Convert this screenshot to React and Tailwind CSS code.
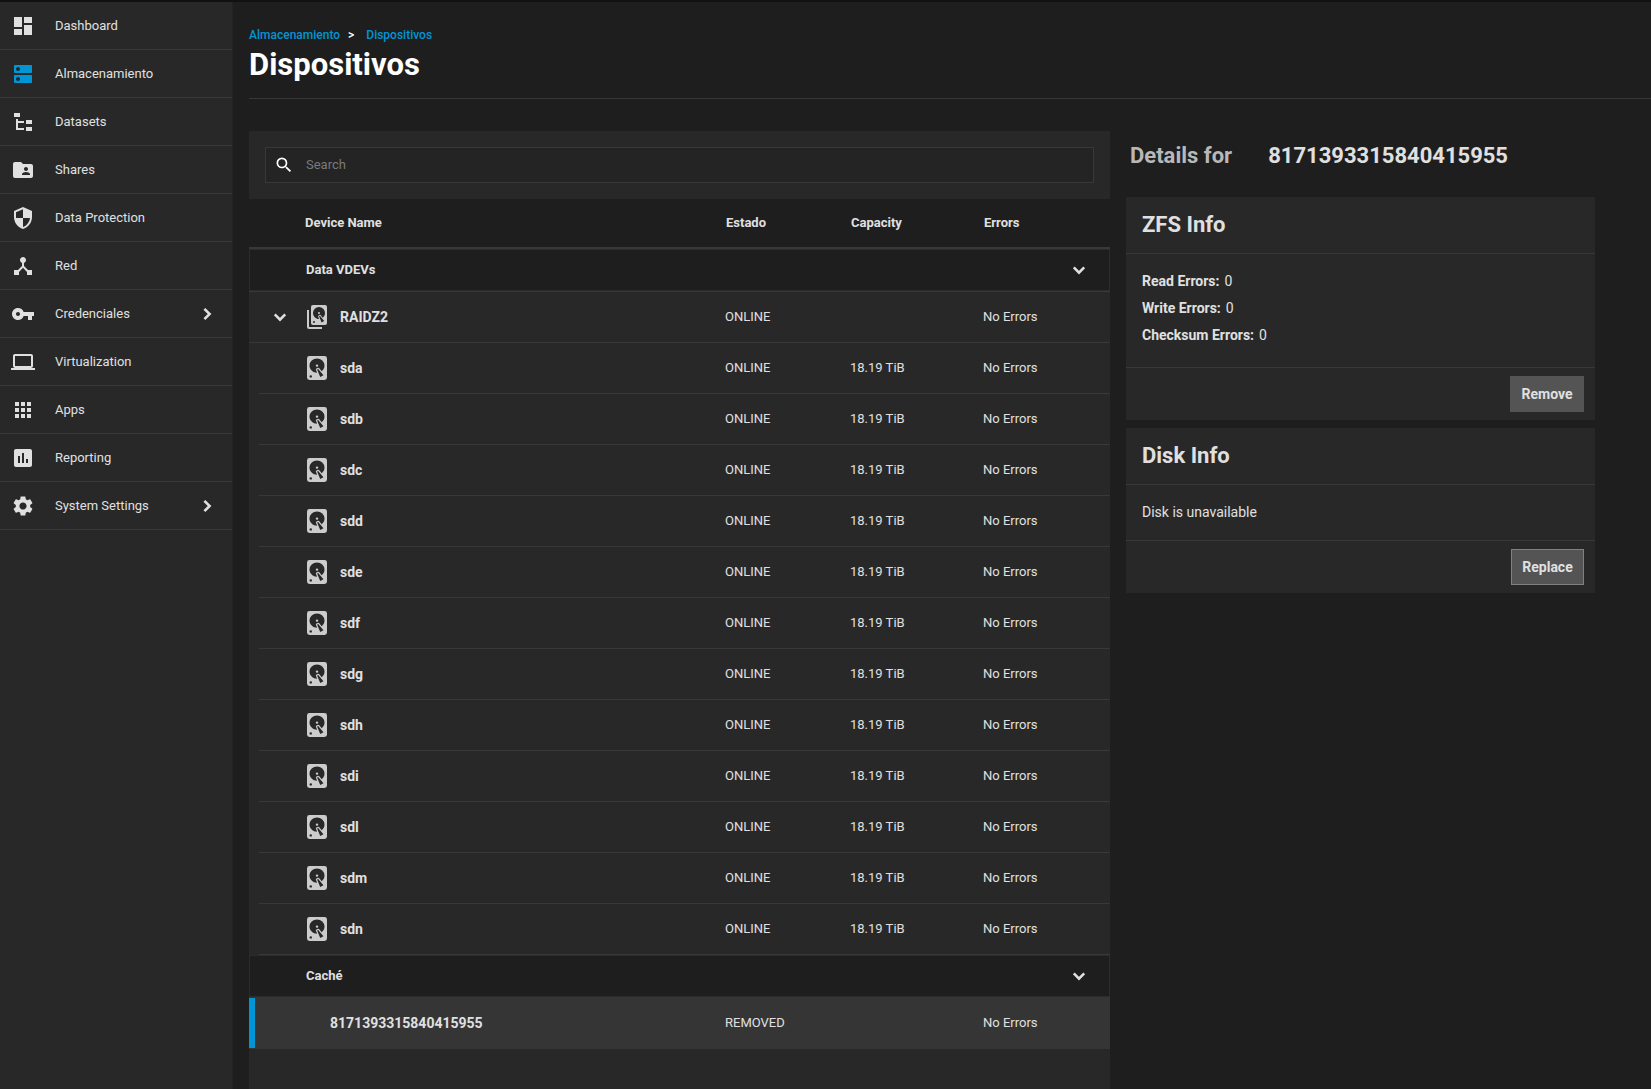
import { useState } from "react";
import {
  MdApps,
  MdAssessment,
  MdDashboard,
  MdDeviceHub,
  MdDns,
  MdFolderShared,
  MdLaptop,
  MdSearch,
  MdSecurity,
  MdSettings,
  MdVpnKey,
} from "react-icons/md";

const DISK_PATH =
  "M6,2H18A2,2 0 0,1 20,4V20A2,2 0 0,1 18,22H6A2,2 0 0,1 4,20V4A2,2 0 0,1 6,2M12,4A6,6 0 0,0 6,10C6,13.31 8.69,16 12.1,16L11.22,13.77C10.95,13.29 11.11,12.68 11.59,12.4L12.45,11.9C12.93,11.63 13.54,11.79 13.82,12.27L15.74,14.69C17.12,13.59 18,11.9 18,10A6,6 0 0,0 12,4M12,9A1,1 0 0,1 13,10A1,1 0 0,1 12,11A1,1 0 0,1 11,10A1,1 0 0,1 12,9M7,18A1,1 0 0,0 6,19A1,1 0 0,0 7,20A1,1 0 0,0 8,19A1,1 0 0,0 7,18M12.09,13.27L14.58,19.58L17.17,18.08L12.95,12.77L12.09,13.27Z";

function FileTreeIcon({ className }) {
  return (
    <svg viewBox="0 0 24 24" fill="currentColor" className={className}>
      <path d="M3,3H9V7H3V3M15,10H21V14H15V10M15,17H21V21H15V17M13,13H7V18H13V20H7L5,20V9H7V11H13V13Z" />
    </svg>
  );
}

function DiskIcon() {
  return (
    <svg viewBox="4 2 16 20" preserveAspectRatio="none" fill="currentColor" className="h-6 w-5 shrink-0 text-[#cccccc]">
      <path d={DISK_PATH} />
    </svg>
  );
}

function DiskGroupIcon() {
  return (
    <svg viewBox="0 0 20 24" fill="currentColor" className="h-6 w-5 shrink-0 text-[#cccccc]">
      <path d="M0 5H2V22H15V24H2A2 2 0 0 1 0 22Z" />
      <path d={DISK_PATH} transform="translate(0 -2)" />
    </svg>
  );
}

// points right when closed, down when open
function Chevron({ open }) {
  return (
    <svg viewBox="0 0 24 24" fill="none" stroke="currentColor" strokeWidth="2.6" className="size-6">
      <path d={open ? "M6.8 9.4L12 14.6L17.2 9.4" : "M9.4 6.8L14.6 12L9.4 17.2"} />
    </svg>
  );
}

const menu = [
  { label: "Dashboard", icon: MdDashboard },
  { label: "Almacenamiento", icon: MdDns, active: true },
  { label: "Datasets", icon: FileTreeIcon },
  { label: "Shares", icon: MdFolderShared },
  { label: "Data Protection", icon: MdSecurity },
  { label: "Red", icon: MdDeviceHub },
  { label: "Credenciales", icon: MdVpnKey, nested: true },
  { label: "Virtualization", icon: MdLaptop },
  { label: "Apps", icon: MdApps },
  { label: "Reporting", icon: MdAssessment },
  { label: "System Settings", icon: MdSettings, nested: true },
];

const disks = ["sda", "sdb", "sdc", "sdd", "sde", "sdf", "sdg", "sdh", "sdi", "sdl", "sdm", "sdn"];

function Sidebar() {
  return (
    <nav className="w-[233px] shrink-0 border-r border-[#232323] bg-[#282828]">
      {menu.map(({ label, icon: Icon, active, nested }) => (
        <a
          key={label}
          href="#"
          className="flex h-12 items-center border-b border-[#383838] pr-[13px] pl-[11px] text-[13px]"
        >
          <Icon className={active ? "size-6 text-[#0095d5]" : "size-6 text-[#e0e0e0]"} />
          <span className="ml-5 flex-1">{label}</span>
          {nested && <Chevron />}
        </a>
      ))}
    </nav>
  );
}

function GroupRow({ label, open, onToggle }) {
  return (
    <tr className="h-[42px] bg-[#1e1e1e]">
      <th
        colSpan={3}
        scope="rowgroup"
        className="border-y border-l border-[#2c2c2c] pl-14 text-left text-[13px] font-bold"
      >
        {label}
      </th>
      <td className="border-y border-r border-[#2c2c2c] pr-[18px]">
        <button onClick={onToggle} aria-label={label} aria-expanded={open} className="ml-auto block">
          <Chevron open={open} />
        </button>
      </td>
    </tr>
  );
}

function DeviceTable() {
  const [dataOpen, setDataOpen] = useState(true);
  const [cacheOpen, setCacheOpen] = useState(true);
  const [raidOpen, setRaidOpen] = useState(true);

  return (
    <table className="w-full table-fixed border-separate border-spacing-0 text-[13px]">
      <colgroup>
        <col />
        <col className="w-[125px]" />
        <col className="w-[133px]" />
        <col className="w-[127px]" />
      </colgroup>
      <thead className="bg-[#1e1e1e]">
        <tr className="h-[50px] text-left">
          <th className="border-b-2 border-[#383838] pl-14 font-bold">Device Name</th>
          <th className="border-b-2 border-[#383838] pl-px font-bold">Estado</th>
          <th className="border-b-2 border-[#383838] pl-px font-bold">Capacity</th>
          <th className="border-b-2 border-[#383838] pl-px font-bold">Errors</th>
        </tr>
      </thead>
      <tbody>
        <GroupRow label="Data VDEVs" open={dataOpen} onToggle={() => setDataOpen(!dataOpen)} />
        {dataOpen && (
          <tr className="h-[52px]">
            <td className="border-y border-[#383838]">
              <div className="flex items-center pl-[19px]">
                <button onClick={() => setRaidOpen(!raidOpen)} aria-label="RAIDZ2" aria-expanded={raidOpen}>
                  <Chevron open={raidOpen} />
                </button>
                <span className="ml-[15px] flex items-center gap-[13px] text-sm font-bold">
                  <DiskGroupIcon />
                  RAIDZ2
                </span>
              </div>
            </td>
            <td className="border-y border-[#383838]">ONLINE</td>
            <td className="border-y border-[#383838]"></td>
            <td className="border-y border-[#383838]">No Errors</td>
          </tr>
        )}
        {dataOpen &&
          raidOpen &&
          disks.map((name) => (
            <tr key={name} className="h-[51px]">
              <td className="pl-[10px]">
                <div className="flex h-[51px] items-center gap-[13px] border-b border-[#383838] pl-12 text-sm font-bold">
                  <DiskIcon />
                  {name}
                </div>
              </td>
              <td className="border-b border-[#383838]">ONLINE</td>
              <td className="border-b border-[#383838]">18.19 TiB</td>
              <td className="border-b border-[#383838]">No Errors</td>
            </tr>
          ))}
        <GroupRow label="Caché" open={cacheOpen} onToggle={() => setCacheOpen(!cacheOpen)} />
        {cacheOpen && (
          <tr className="h-[52px] bg-[#353535]">
            <td>
              <div className="flex h-[50px] items-center border-l-6 border-[#0095d5] pl-[75px] text-sm font-bold">
                8171393315840415955
              </div>
            </td>
            <td>REMOVED</td>
            <td></td>
            <td>No Errors</td>
          </tr>
        )}
      </tbody>
    </table>
  );
}

function Card({ title, action, bordered, children }) {
  return (
    <section className="bg-[#282828] text-sm">
      <h3 className="flex h-[57px] items-center border-b border-[#383838] px-4 text-[22px] font-bold">{title}</h3>
      {children}
      <div className="flex justify-end border-t border-[#383838] px-[11px] py-2">
        <button
          className={
            bordered
              ? "h-9 min-w-[73px] border border-[#808080] bg-[#545454] px-[10px] font-bold"
              : "h-9 min-w-[74px] border border-[#545454] bg-[#545454] px-[10px] font-bold"
          }
        >
          {action}
        </button>
      </div>
    </section>
  );
}

export default function App() {
  return (
    <div className="flex min-h-screen border-t-2 border-[#111111] bg-[#1e1e1e] font-['Roboto',sans-serif] text-[#e0e0e0]">
      <Sidebar />
      <main className="flex min-w-0 flex-1 flex-col pl-4">
        <header className="border-b border-[#383838] pt-[22px] pb-[13px]">
          <nav className="flex h-[21px] items-center gap-2 text-xs font-medium text-[#0095d5]">
            <a href="#">Almacenamiento</a>
            <span className="text-white">&gt;</span>
            <a href="#" className="ml-1">Dispositivos</a>
          </nav>
          <h1 className="text-[31px] leading-10 font-bold text-white">Dispositivos</h1>
        </header>
        <div className="flex flex-1 gap-4 pt-8 pr-14">
          <div className="min-w-0 flex-1 bg-[#282828]">
            <div className="p-4">
              <label className="flex h-9 items-center border border-[#383838] bg-[#242424] pl-2">
                <MdSearch className="size-5 text-white" />
                <input
                  type="search"
                  aria-label="Search"
                  placeholder="Search"
                  className="ml-3 flex-1 bg-transparent text-[13px] outline-none placeholder:text-[#7a7a7a]"
                />
              </label>
            </div>
            <DeviceTable />
          </div>
          <aside className="w-[469px] shrink-0">
            <h2 className="flex h-[66px] gap-9 pt-[9px] pl-1 text-[22px] leading-8 font-bold">
              <span className="text-[#b8b8b8]">Details for</span>
              <span>8171393315840415955</span>
            </h2>
            <div className="flex flex-col gap-2">
              <Card title="ZFS Info" action="Remove">
                <dl className="px-4 pt-[14px] pb-[18px] leading-[27px]">
                  <div className="flex gap-[5px]">
                    <dt className="font-bold">Read Errors:</dt>
                    <dd>0</dd>
                  </div>
                  <div className="flex gap-[5px]">
                    <dt className="font-bold">Write Errors:</dt>
                    <dd>0</dd>
                  </div>
                  <div className="flex gap-[5px]">
                    <dt className="font-bold">Checksum Errors:</dt>
                    <dd>0</dd>
                  </div>
                </dl>
              </Card>
              <Card title="Disk Info" action="Replace" bordered>
                <p className="px-4 py-[14px] leading-[27px]">Disk is unavailable</p>
              </Card>
            </div>
          </aside>
        </div>
      </main>
    </div>
  );
}
